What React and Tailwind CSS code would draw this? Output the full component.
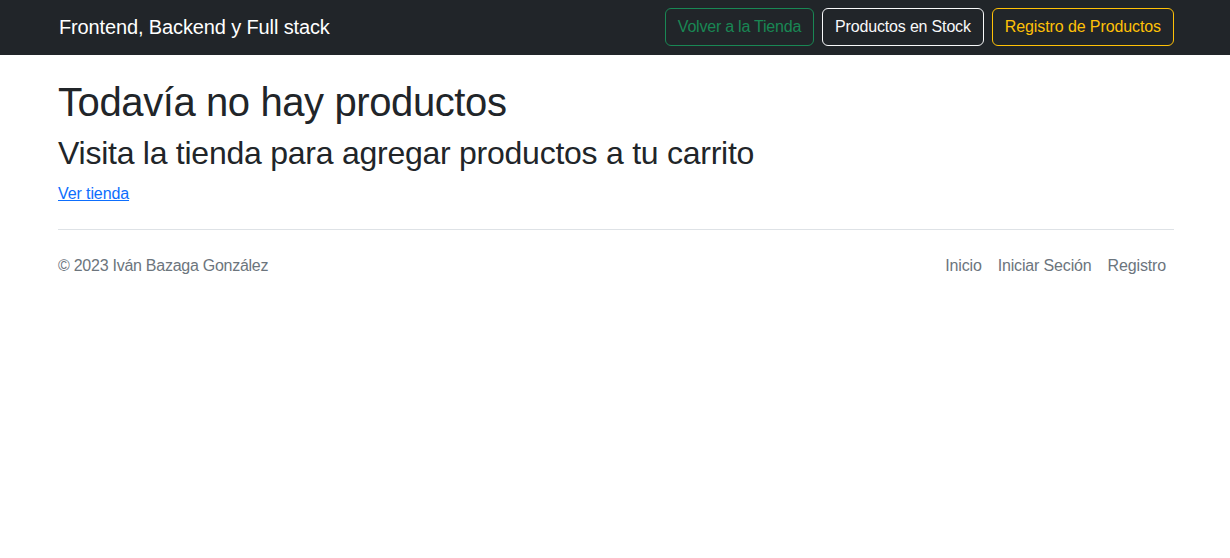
import React from 'react'

const App = () => {
  return (
    <div className="min-h-screen bg-white text-[#212529] font-['Liberation_Sans',Arial,sans-serif]">
      {/* Navbar */}
      <nav className="bg-[#212529] h-[55px] pt-2 pb-[9px]">
        <div className="w-[1140px] mx-auto pl-[13px] pr-[11px] h-[38px] flex items-center justify-between">
          <a href="#" className="text-white text-[20px] leading-[30px] pl-px tracking-[-0.13px]">
            Frontend, Backend y Full stack
          </a>
          <div className="flex items-center gap-2">
            <button className="h-[38px] px-3 border border-[#198754] text-[#198754] rounded-[6px] text-base font-light tracking-[-0.22px]">
              Volver a la Tienda
            </button>
            <button className="h-[38px] px-3 border border-[#f8f9fa] text-[#f8f9fa] rounded-[6px] text-base font-light tracking-[-0.17px]">
              Productos en Stock
            </button>
            <button className="h-[38px] px-3 border border-[#ffc107] text-[#ffc107] rounded-[6px] text-base font-light tracking-[-0.1px]">
              Registro de Productos
            </button>
          </div>
        </div>
      </nav>

      {/* Main */}
      <main className="w-[1140px] mx-auto pl-[13px] pr-[11px] pt-[23px]">
        <h1 className="text-[40px] leading-[48px] mb-2 tracking-[-0.4px]">Todavía no hay productos</h1>
        <h2 className="text-[32px] leading-[38.4px] mb-2 tracking-[-0.25px]">Visita la tienda para agregar productos a tu carrito</h2>
        <div className="pt-[2px]">
          <a href="#" className="text-[#0d6efd] underline text-base leading-6 tracking-[-0.1px]">Ver tienda</a>
        </div>

        {/* Footer */}
        <footer className="mt-[23px] border-t border-[#dee2e6] py-4 flex items-center justify-between">
          <p className="text-[#6c757d] text-base leading-6 font-light tracking-[-0.26px]">© 2023 Iván Bazaga González</p>
          <ul className="flex items-center">
            <li><a href="#" className="block px-2 py-2 text-[#6c757d] text-base leading-6 font-light tracking-[-0.15px]">Inicio</a></li>
            <li><a href="#" className="block px-2 py-2 text-[#6c757d] text-base leading-6 font-light tracking-[-0.15px]">Iniciar Seción</a></li>
            <li><a href="#" className="block px-2 py-2 text-[#6c757d] text-base leading-6 font-light tracking-[-0.15px]">Registro</a></li>
          </ul>
        </footer>
      </main>
    </div>
  )
}

export default App
